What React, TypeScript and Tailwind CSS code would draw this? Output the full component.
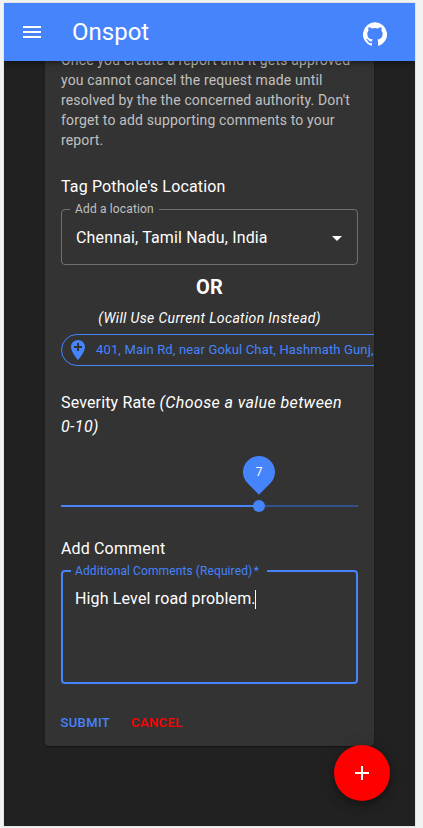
import React from "react";

const GITHUB_PATH =
  "M12 .3a12 12 0 0 0-3.8 23.4c.6.1.8-.3.8-.6v-2c-3.3.7-4-1.6-4-1.6-.6-1.4-1.4-1.8-1.4-1.8-1-.7.1-.7.1-.7 1.2 0 1.9 1.2 1.9 1.2 1 1.8 2.8 1.3 3.5 1 0-.8.4-1.3.7-1.6-2.7-.3-5.5-1.3-5.5-6 0-1.2.5-2.3 1.3-3.1-.2-.4-.6-1.6 0-3.2 0 0 1-.3 3.4 1.2a11.5 11.5 0 0 1 6 0c2.3-1.5 3.3-1.2 3.3-1.2.6 1.6.2 2.8 0 3.2.9.8 1.3 1.9 1.3 3.2 0 4.6-2.8 5.6-5.5 5.9.5.4.9 1 .9 2.2v3.3c0 .3.1.7.8.6A12 12 0 0 0 12 .3";

function Icon({ d, className = "" }: { d: string; className?: string }) {
  return (
    <svg viewBox="0 0 24 24" className={`size-6 shrink-0 fill-current ${className}`} aria-hidden="true">
      <path d={d} />
    </svg>
  );
}

function AppBar() {
  return (
    <header className="relative z-10 flex h-[58px] shrink-0 items-center bg-[#4684fc] pr-7 pl-4 shadow-[0_2px_4px_-1px_rgba(0,0,0,0.2),0_4px_5px_rgba(0,0,0,0.14),0_1px_10px_rgba(0,0,0,0.12)]">
      <button aria-label="Menu">
        <Icon d="M3 18h18v-2H3v2zm0-5h18v-2H3v2zm0-7v2h18V6H3z" />
      </button>
      <h1 className="ml-7 text-2xl leading-8">Onspot</h1>
      <button aria-label="GitHub" className="mt-1 ml-auto">
        <Icon d={GITHUB_PATH} />
      </button>
    </header>
  );
}

function SeveritySlider({ value, min = 1, max = 10 }: { value: number; min?: number; max?: number }) {
  const percent = ((value - min) / (max - min)) * 100;
  return (
    <div className="relative mt-[66px] h-0.5 bg-[#325188]">
      <div className="h-full bg-[#4684fc]" style={{ width: `${percent}%` }} />
      <div
        className="absolute -top-[5px] -ml-1.5 size-3 rounded-full bg-[#4684fc]"
        style={{ left: `${percent}%` }}
      >
        <div className="absolute -top-11 -left-2.5 flex size-8 -rotate-45 items-center justify-center rounded-[50%_50%_50%_0] bg-[#4684fc]">
          <span className="rotate-45 text-xs leading-none">{value}</span>
        </div>
      </div>
    </div>
  );
}

export default function App() {
  return (
    <div className="h-[828px] w-[423px] bg-[#f1f3f3] pt-[3px] pl-1 font-['Roboto',sans-serif] text-white">
      <div className="flex h-[823px] w-[411px] flex-col overflow-hidden bg-[#212121] shadow-[0_0_0_1px_#e4e4e4]">
        <AppBar />
        <main className="relative mx-[41px] -mt-[27px] h-[712px] shrink-0 rounded bg-[#333] px-4 pt-4 text-base leading-6 tracking-[0.00938em] shadow-[0_2px_1px_-1px_rgba(0,0,0,0.2),0_1px_1px_rgba(0,0,0,0.14),0_1px_3px_rgba(0,0,0,0.12)]">
          <p className="text-sm leading-5 tracking-[0.01071em] text-white/70">
            Once you create a report and it gets approved you cannot cancel the request made until resolved by the the
            concerned authority. Don't forget to add supporting comments to your report.
          </p>
          <h2 className="mt-[25px]">Tag Pothole's Location</h2>
          <fieldset className="mt-[5px] h-[61px] rounded border border-[#707070] px-2">
            <legend className="h-[11px] px-[5px] text-xs leading-[11px] text-white/70">Add a location</legend>
            <div className="flex items-center pt-[11px] pl-1.5">
              <span>Chennai, Tamil Nadu, India</span>
              <Icon d="M7 10l5 5 5-5z" className="ml-auto" />
            </div>
          </fieldset>
          <p className="mt-1.5 text-center text-xl leading-8 font-bold tracking-[0.0075em]">OR</p>
          <p className="mt-[5px] text-center text-sm leading-5 tracking-[0.35px] italic">
            (Will Use Current Location Instead)
          </p>
          <div className="-mr-4 mt-1.5 overflow-hidden">
            <div className="flex h-8 w-[420px] items-center rounded-full border border-[#4684fc] text-[13px] whitespace-nowrap text-[#4684fc]">
              <Icon
                d="M12 2C8.14 2 5 5.14 5 9c0 5.25 7 13 7 13s7-7.75 7-13c0-3.86-3.14-7-7-7zm4 8h-3v3h-2v-3H8V8h3V5h2v3h3v2z"
                className="ml-1"
              />
              <span className="ml-1.5">401, Main Rd, near Gokul Chat, Hashmath Gunj, Koti</span>
            </div>
          </div>
          <h2 className="mt-[25px]">
            Severity Rate{" "}
            <i className="tracking-[0.4px]">
              (Choose a value between <span className="whitespace-nowrap">0-10)</span>
            </i>
          </h2>
          <SeveritySlider value={7} />
          <h2 className="mt-[30px]">Add Comment</h2>
          <fieldset className="mt-1 h-[119px] rounded border-2 border-[#4684fc] px-2">
            <legend className="h-3 pr-2 pl-1 text-xs leading-3 tracking-[0.1px] text-[#4684fc]">
              Additional Comments (Required){"\u200a"}*
            </legend>
            <div className="flex items-center pt-2.5 pl-1">
              <span>High Level road problem.</span>
              <span className="-ml-px h-[19px] w-px bg-white" />
            </div>
          </fieldset>
          <div className="mt-[27px] -ml-[0.5px] flex gap-[21px] text-[13px] font-medium tracking-[0.02857em]">
            <button className="text-[#4684fc]">SUBMIT</button>
            <button className="text-[#f00]">CANCEL</button>
          </div>
        </main>
        <button
          aria-label="Add"
          className="relative z-10 -mt-px mr-[25px] flex size-14 shrink-0 items-center justify-center self-end rounded-full bg-[#f00] shadow-[0_3px_5px_-1px_rgba(0,0,0,0.2),0_6px_10px_rgba(0,0,0,0.14),0_1px_18px_rgba(0,0,0,0.12)]"
        >
          <Icon d="M19 13h-6v6h-2v-6H5v-2h6V5h2v6h6v2z" />
        </button>
      </div>
    </div>
  );
}
